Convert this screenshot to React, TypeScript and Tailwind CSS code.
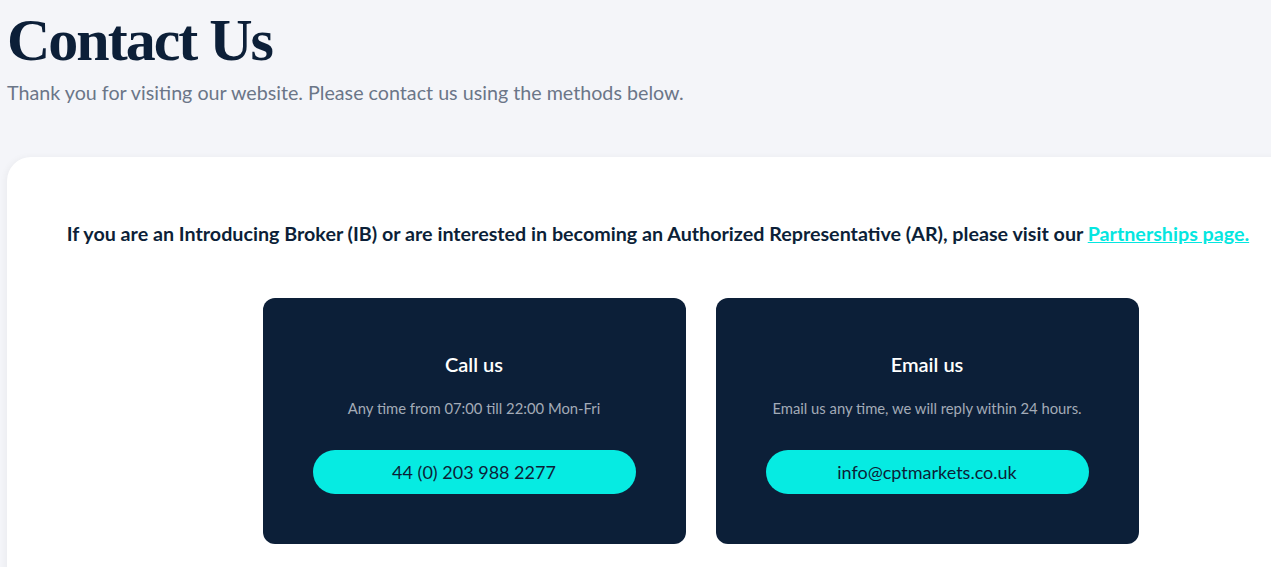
export default function App() {
  const cards = [
    { title: 'Call us', text: 'Any time from 07:00 till 22:00 Mon-Fri', action: '44 (0) 203 988 2277' },
    { title: 'Email us', text: 'Email us any time, we will reply within 24 hours.', action: 'info@cptmarkets.co.uk' },
  ];

  return (
    <div className="min-h-screen w-[1271px] overflow-hidden bg-[#f4f5f9] font-['Lato',sans-serif]">
      {/* Header */}
      <div className="px-[7px] pt-[10px]">
        <h1 className="font-['Liberation_Serif',serif] text-[60px] font-bold leading-[60px] tracking-[-2px] text-[#0c1f38]">
          Contact Us
        </h1>
        <p className="mt-[9px] text-[19.7px] leading-[28px] text-[#6b7688]">
          Thank you for visiting our website. Please contact us using the methods below.
        </p>
      </div>

      {/* Main panel */}
      <div className="ml-[7px] mt-[50px] w-[1302px] rounded-tl-[24px] rounded-tr-[24px] bg-white pt-[63px] pb-10 shadow-[-2px_0_6px_rgba(0,0,0,0.04)]">
        <p className="text-center text-[19.7px] font-bold leading-[28px] text-[#0c1f38]">
          If you are an Introducing Broker (IB) or are interested in becoming an Authorized Representative (AR), please visit our{' '}
          <a href="#" className="text-[#05e6e0] underline">
            Partnerships page.
          </a>
        </p>

        <div className="mt-[50px] flex justify-center gap-[30px] pl-[85px]">
          {cards.map((card) => (
            <div
              key={card.title}
              className="flex h-[246px] w-[423px] flex-col items-center rounded-[12px] bg-[#0c1f38] px-[50px] pt-[52px]"
            >
              <h3 className="text-[20px] font-semibold leading-[28px] text-white">{card.title}</h3>
              <p className="mt-[21px] text-[14.8px] leading-[18px] text-[#a3abb7]">{card.text}</p>
              <button className="mt-[33px] h-[44px] w-full rounded-full bg-[#06ebe2] text-[18px] text-[#0c1f38]">
                {card.action}
              </button>
            </div>
          ))}
        </div>
      </div>
    </div>
  );
}
